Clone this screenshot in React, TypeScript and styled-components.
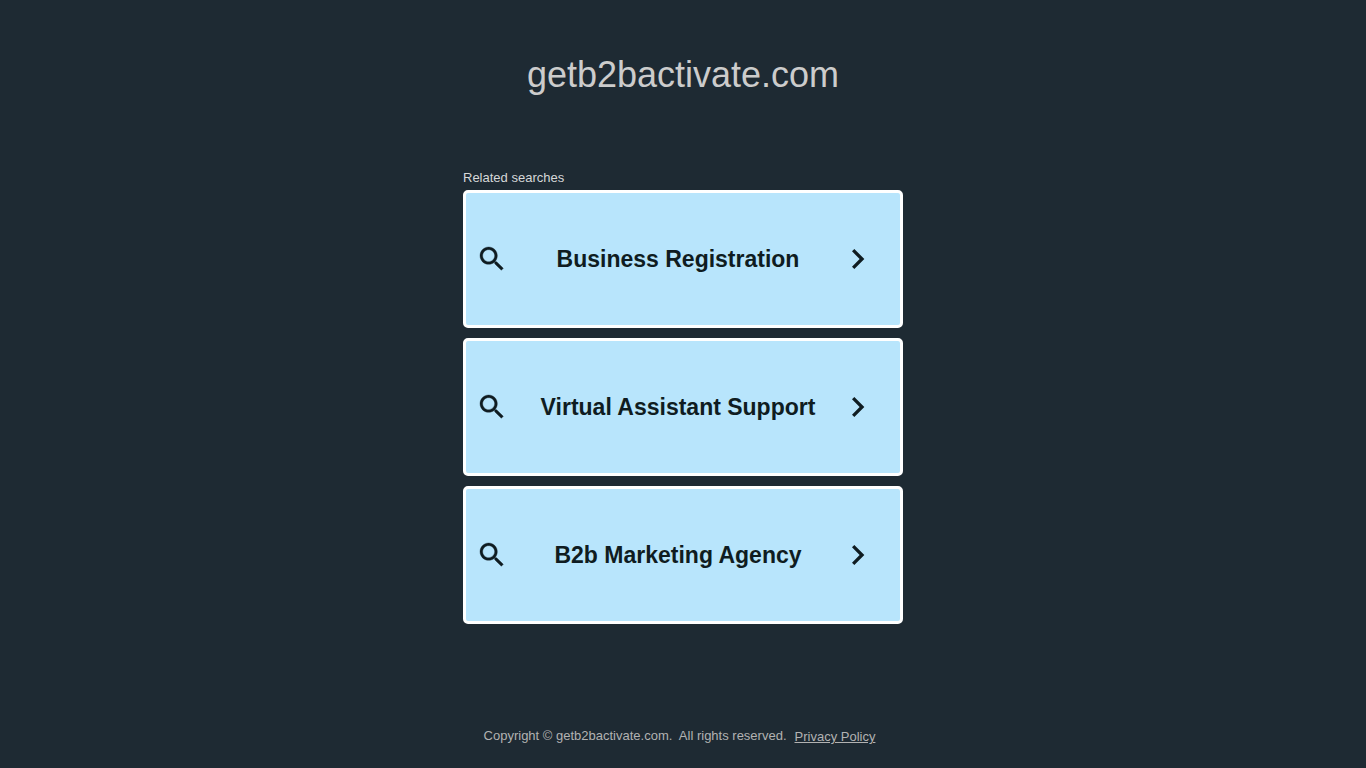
import React from "react";
import styled, { createGlobalStyle } from "styled-components";

const GlobalStyle = createGlobalStyle`
  *, *::before, *::after { box-sizing: border-box; }
  body {
    margin: 0;
    background: #1e2a33;
    font-family: "Liberation Sans", Arial, sans-serif;
  }
`;

const Page = styled.div`
  min-height: 100vh;
  display: flex;
  flex-direction: column;
  align-items: center;
`;

const Title = styled.h1`
  margin: 54px 0 0;
  font-size: 36px;
  line-height: 42px;
  font-weight: 400;
  color: #cccccc;
`;

const Searches = styled.main`
  width: 100%;
  max-width: 440px;
  margin-top: 72px;
`;

const Heading = styled.h2`
  margin: 0;
  padding: 2px 0 4px;
  font-size: 13px;
  line-height: 16px;
  font-weight: 400;
  color: #d6d8d9;
`;

const List = styled.ul`
  margin: 0;
  padding: 0;
  list-style: none;
  display: flex;
  flex-direction: column;
  gap: 10px;
`;

const Card = styled.a`
  display: flex;
  align-items: center;
  min-height: 138px;
  padding: 0 22px 0 10px;
  border: 3px solid #ffffff;
  border-radius: 5px;
  background: #b8e5fc;
  color: #0f1c21;
  text-decoration: none;
`;

const Label = styled.span`
  flex: 1;
  margin-left: 10px;
  text-align: center;
  font-size: 23px;
  line-height: 28px;
  font-weight: 700;
`;

const Icon = styled.svg<{ $size: number }>`
  flex: none;
  width: ${(p) => p.$size}px;
  height: ${(p) => p.$size}px;
  fill: currentColor;
`;

const Footer = styled.footer`
  margin-top: auto;
  padding: 0 7px 23px 0;
  display: flex;
  align-items: flex-start;
  gap: 8px;
  font-size: 13px;
  line-height: 16px;
  color: #b2b2b2;
`;

const PolicyLink = styled.a`
  padding-top: 1px;
  color: inherit;
`;

const terms = ["Business Registration", "Virtual Assistant Support", "B2b Marketing Agency"];

export default function App() {
  return (
    <Page>
      <GlobalStyle />
      <Title>getb2bactivate.com</Title>
      <Searches>
        <Heading>Related searches</Heading>
        <List>
          {terms.map((term) => (
            <li key={term}>
              <Card href="#">
                <Icon $size={32} viewBox="0 0 24 24" aria-hidden="true">
                  <path
                    stroke="currentColor"
                    strokeWidth="0.25"
                    d="M15.5 14h-.79l-.28-.27C15.41 12.59 16 11.11 16 9.5 16 5.91 13.09 3 9.5 3S3 5.91 3 9.5 5.91 16 9.5 16c1.61 0 3.09-.59 4.23-1.57l.27.28v.79l5 4.99L20.49 19l-4.99-5zm-6 0C7.01 14 5 11.99 5 9.5S7.01 5 9.5 5 14 7.01 14 9.5 11.99 14 9.5 14z"
                  />
                </Icon>
                <Label>{term}</Label>
                <Icon $size={40} viewBox="0 0 24 24" aria-hidden="true">
                  <path d="M9.8 6L8.4 7.41 12.98 12l-4.58 4.59L9.8 18l6-6z" />
                </Icon>
              </Card>
            </li>
          ))}
        </List>
      </Searches>
      <Footer>
        <span>Copyright © getb2bactivate.com.&nbsp; All rights reserved.</span>
        <PolicyLink href="#">Privacy Policy</PolicyLink>
      </Footer>
    </Page>
  );
}
